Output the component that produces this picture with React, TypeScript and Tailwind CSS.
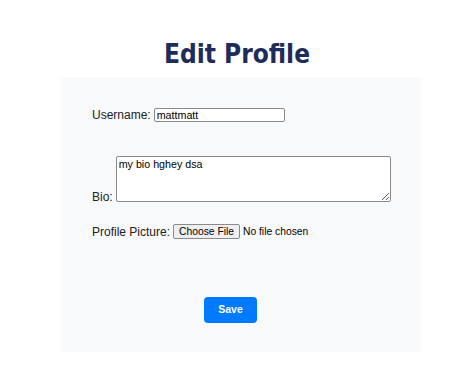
import React, { useState } from 'react';

export default function App() {
  const [username, setUsername] = useState('mattmatt');
  const [bio, setBio] = useState('my bio hghey dsa');

  return (
    <div className="min-h-screen bg-white" style={{ fontFamily: '"Liberation Sans", Arial, sans-serif' }}>
      {/* Title */}
      <h1
        className="pt-[39px] h-[77px] text-center text-[26px] leading-[30px] font-bold text-[#1f2b5b]"
        style={{ fontFamily: '"DejaVu Sans Condensed", "DejaVu Sans", sans-serif' }}
      >
        Edit Profile
      </h1>

      {/* Form panel */}
      <form
        className="ml-[61px] w-[360px] bg-[#f8f9fa] pt-[31px] pb-[29px] pl-[31px] flex flex-col"
        onSubmit={(e) => e.preventDefault()}
      >
        <div className="flex items-center h-[14px] text-[12px] text-[#222]">
          <label className="mr-[3px]">Username:</label>
          <input
            value={username}
            onChange={(e) => setUsername(e.target.value)}
            className="w-[131px] h-[14px] px-[2px] text-[10.7px] leading-[12px] text-black bg-white border border-[#8a8a8a] rounded-[2px] outline-none"
          />
        </div>

        <div className="flex items-end mt-[34px] text-[12px] text-[#222]">
          <label className="mr-[3px] leading-[13px] mb-[-2px]">Bio:</label>
          <textarea
            value={bio}
            onChange={(e) => setBio(e.target.value)}
            className="w-[275px] h-[46px] px-[2px] py-[1px] text-[10.7px] leading-[12px] text-black bg-white border border-[#8a8a8a] rounded-[2px] outline-none resize"
          />
        </div>

        <div className="flex items-center mt-[22px] h-[15px] text-[12px] text-[#222]">
          <label className="mr-[3px]">Profile Picture:</label>
          <button
            type="button"
            className="h-[15px] px-[5px] text-[10.3px] leading-[12px] text-black bg-[#efefef] border border-[#8a8a8a] rounded-[2px]"
          >
            Choose File
          </button>
          <span className="ml-[3px] text-[10.3px] text-black">No file chosen</span>
        </div>

        <button
          type="submit"
          className="mt-[58px] ml-[112px] w-[53px] h-[26px] bg-[#007bff] text-white text-[10.5px] font-semibold rounded-[4px]"
        >
          Save
        </button>
      </form>
    </div>
  );
}
